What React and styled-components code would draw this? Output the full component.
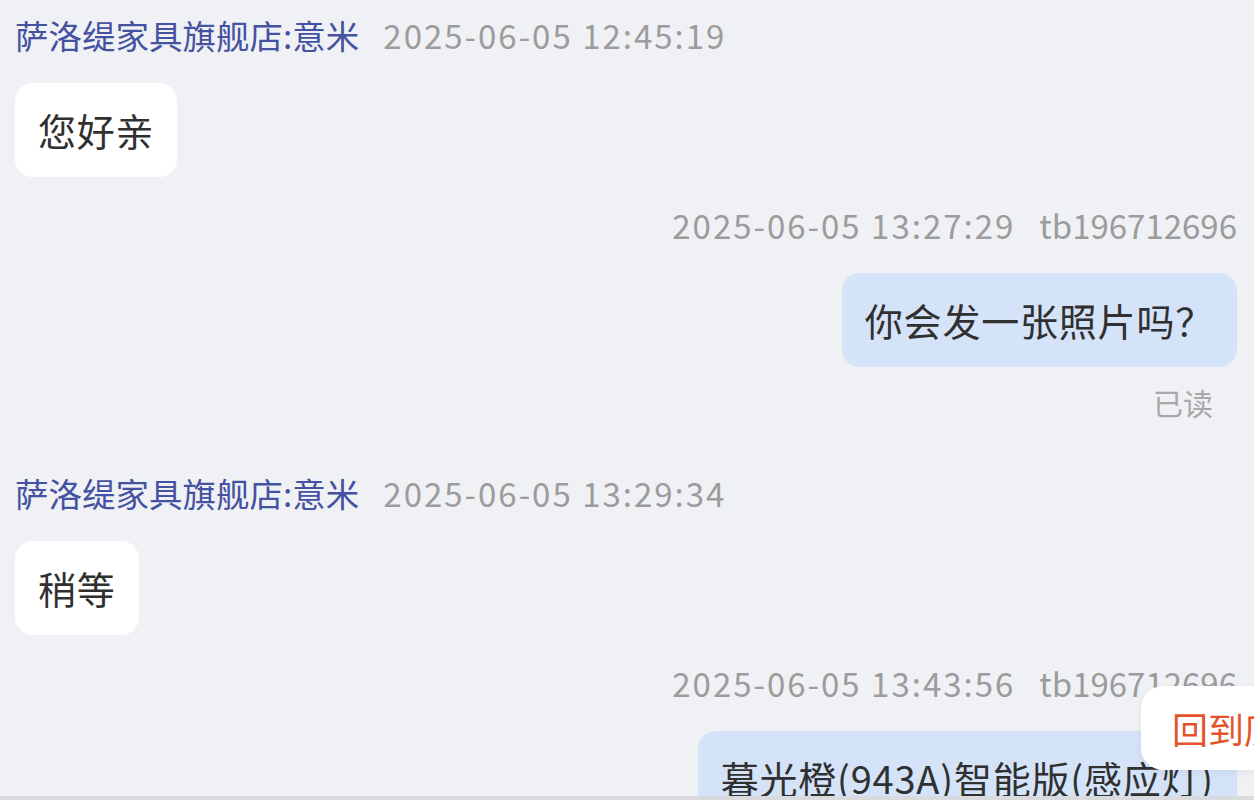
import styled, { createGlobalStyle } from "styled-components"

const GlobalStyle = createGlobalStyle`
  html, body {
    margin: 0;
    padding: 0;
    background: #f0f1f5;
  }
  body {
    font-family: "Noto Sans CJK SC", "Noto Sans", sans-serif;
  }
`

const messages = [
  { id: 1, side: "left", name: "萨洛缇家具旗舰店:意米", time: "2025-06-05 12:45:19", text: "您好亲" },
  { id: 2, side: "right", name: "tb196712696", time: "2025-06-05 13:27:29", text: "你会发一张照片吗？", read: true },
  { id: 3, side: "left", name: "萨洛缇家具旗舰店:意米", time: "2025-06-05 13:29:34", text: "稍等" },
  { id: 4, side: "right", name: "tb196712696", time: "2025-06-05 13:43:56", text: "暮光橙(943A)智能版(感应灯)\n尺寸可以发一下吗" },
]

export default function App() {
  return (
    <>
      <GlobalStyle />
      <Page>
        <ChatList>
          {messages.map(m => (
            <Group key={m.id} side={m.side} read={m.read}>
              <Meta side={m.side}>
                {m.side === "left" ? (
                  <>
                    <Name>{m.name}</Name>
                    <Time>{m.time}</Time>
                  </>
                ) : (
                  <>
                    <Time>{m.time}</Time>
                    <UserId>{m.name}</UserId>
                  </>
                )}
              </Meta>
              <Bubble side={m.side}>{m.text}</Bubble>
              {m.read && <ReadMark>已读</ReadMark>}
            </Group>
          ))}
        </ChatList>
        <BackToBottom>回到底部</BackToBottom>
      </Page>
    </>
  )
}

const Page = styled.div`
  position: relative;
  width: 1254px;
  height: 800px;
  overflow: hidden;
  background: #f0f1f5;
  border-bottom: 4px solid #d9dade;
  box-sizing: border-box;
`
const ChatList = styled.div`
  display: flex;
  flex-direction: column;
  padding: 15px 17px 0 15px;
`
const Group = styled.div`
  display: flex;
  flex-direction: column;
  align-items: ${(p) => (p.side === "right" ? "flex-end" : "flex-start")};
  margin-bottom: ${(p) => (p.read ? "51px" : "28px")};
`
const Meta = styled.div`
  display: flex;
  align-items: center;
  gap: 24px;
  height: 40px;
  font-size: 33px;
  line-height: 40px;
  margin-bottom: 28px;
`
const Name = styled.div`
  color: #4551a1;
  font-size: 33.5px;
`
const Time = styled.div`
  color: #9c9c9c;
  letter-spacing: 2px;
`
const UserId = styled.div`
  color: #9c9c9c;
`
const Bubble = styled.div`
  box-sizing: border-box;
  min-height: 94px;
  padding: 24px 23px;
  border-radius: 18px;
  font-size: 38px;
  line-height: 46px;
  letter-spacing: 0.8px;
  white-space: pre-line;
  color: #303030;
  background: ${(p) => (p.side === "right" ? "#d4e3f8" : "#ffffff")};
`
const ReadMark = styled.span`
  margin-top: 15px;
  margin-right: 24px;
  font-size: 30px;
  line-height: 40px;
  color: #a8a8a8;
`
const BackToBottom = styled.div`
  position: absolute;
  left: 1141px;
  top: 686px;
  width: 200px;
  height: 84px;
  display: flex;
  align-items: center;
  padding-left: 31px;
  box-sizing: border-box;
  white-space: nowrap;
  background: #ffffff;
  border-radius: 22px 0 0 22px;
  box-shadow: 0 2px 10px rgba(0, 0, 0, 0.06);
  font-size: 36px;
  color: #e5532b;
`
